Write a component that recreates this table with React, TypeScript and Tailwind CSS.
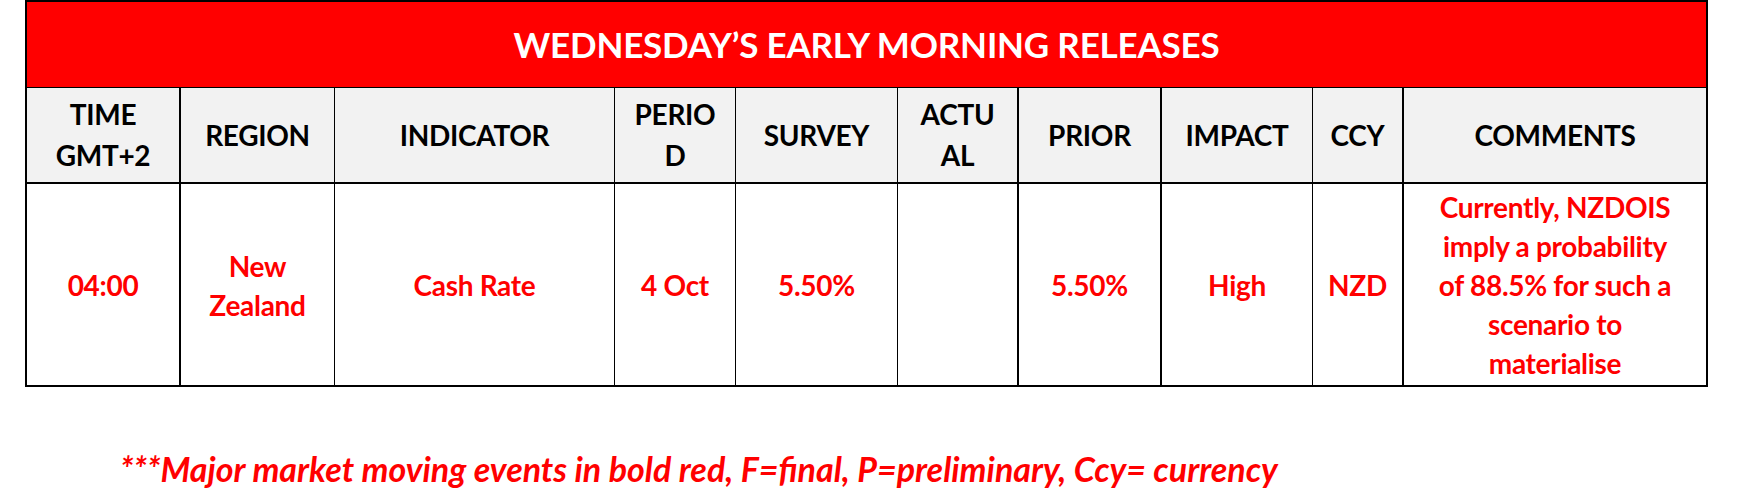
import React from "react";

type Col = { head: React.ReactNode; body: React.ReactNode; cls: string };

const cols: Col[] = [
  { head: <>TIME<br />GMT+2</>, body: "04:00", cls: "border-r-2" },
  { head: "REGION", body: <>New<br />Zealand</>, cls: "border-r" },
  { head: "INDICATOR", body: "Cash Rate", cls: "border-r" },
  { head: <>PERIO<br />D</>, body: "4 Oct", cls: "border-r" },
  { head: "SURVEY", body: "5.50%", cls: "border-r" },
  { head: <>ACTU<br />AL</>, body: "", cls: "border-r-2" },
  { head: "PRIOR", body: "5.50%", cls: "border-r-2" },
  { head: "IMPACT", body: "High", cls: "border-r" },
  { head: "CCY", body: "NZD", cls: "border-r-2" },
  {
    head: "COMMENTS",
    body: (
      <>
        Currently, NZDOIS
        <br />
        imply a probability
        <br />
        of 88.5% for such a
        <br />
        scenario to
        <br />
        materialise
      </>
    ),
    cls: "",
  },
];

const font = { fontFamily: "Lato, 'Open Sans', sans-serif" };

export default function App() {
  return (
    <div className="w-[1737px] h-[494px] bg-white overflow-hidden" style={font}>
      <div className="ml-[25px] w-[1683px] border-2 border-black">
        <div className="h-[86px] bg-[#ff0000] border-b border-black flex items-center justify-center">
          <span className="text-white font-bold text-[35px] leading-none tracking-[-0.2px]">
            WEDNESDAY’S EARLY MORNING RELEASES
          </span>
        </div>
        <div className="grid grid-cols-[154px_154px_280px_121px_162px_121px_143px_151px_91px_302px]">
          {cols.map((c, i) => (
            <div
              key={"h" + i}
              className={`h-[96px] bg-[#f2f2f2] border-b-2 border-black ${c.cls} flex items-center justify-center text-center text-black font-bold text-[28px] leading-[41px] tracking-[-0.3px]`}
            >
              <div>{c.head}</div>
            </div>
          ))}
          {cols.map((c, i) => (
            <div
              key={"b" + i}
              className={`h-[201px] bg-white border-black ${c.cls} flex items-center justify-center text-center text-[#ff0000] font-bold text-[28px] leading-[39px] tracking-[-0.3px]`}
            >
              <div className="pt-[2px]">{c.body}</div>
            </div>
          ))}
        </div>
      </div>
      <div className="mt-[62px] ml-[120px] text-[#ff0000] font-bold italic text-[34px] leading-[40px]">
        ***Major market moving events in bold red, F=final, P=preliminary, Ccy= currency
      </div>
    </div>
  );
}
